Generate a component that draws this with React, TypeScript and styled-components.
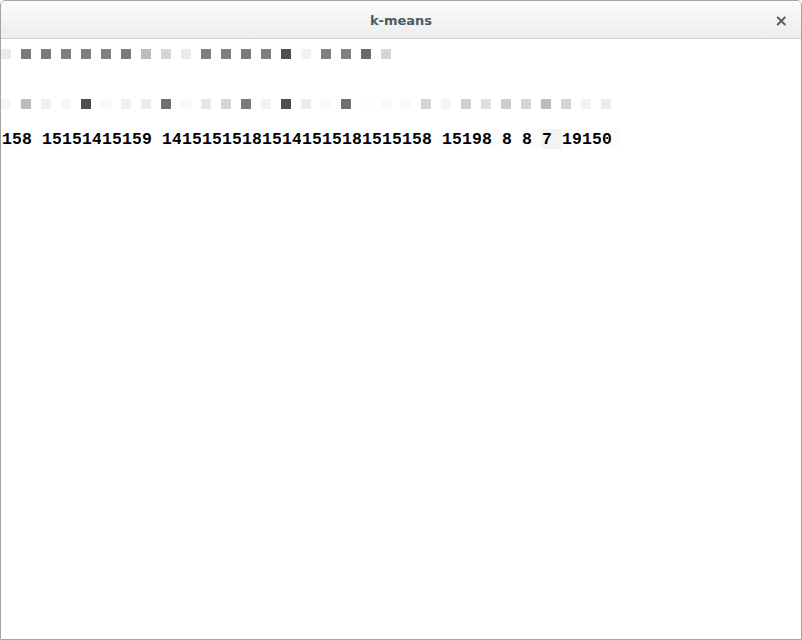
import React from 'react'
import styled, { createGlobalStyle } from 'styled-components'

const GlobalStyle = createGlobalStyle`
  html, body {
    margin: 0;
    padding: 0;
    background: #ffffff;
  }
`;

const Window = styled.div`
  width: 802px;
  height: 640px;
  box-sizing: border-box;
  border: 1px solid #a3a3a3;
  border-radius: 5px 5px 0 0;
  background: #ffffff;
  display: flex;
  flex-direction: column;
  overflow: hidden;
`;

const TitleBar = styled.div`
  height: 38px;
  flex: none;
  box-sizing: border-box;
  border-bottom: 1px solid #cfcfcf;
  background: linear-gradient(#fbfbfb, #ededed);
  display: flex;
  align-items: center;
  justify-content: center;
  position: relative;
`;

const Title = styled.span`
  font: bold 13px "DejaVu Sans", sans-serif;
  color: #4d5b61;
  margin-top: 1px;
`;

const Close = styled.span`
  position: absolute;
  right: 13px;
  top: 10px;
  font: bold 16px "DejaVu Sans", sans-serif;
  color: #4d5b61;
`;

const Content = styled.div`
  padding-top: 10px;
  display: flex;
  flex-direction: column;
`;

const SquareRow = styled.div<{ $gap: number }>`
  display: flex;
  gap: 10px;
  height: 10px;
  margin-bottom: ${(p) => p.$gap}px;
`;

const Square = styled.div<{ $c: string }>`
  width: 10px;
  height: 10px;
  background: ${(p) => p.$c};
`;

const NumberRow = styled.div`
  display: flex;
  height: 20px;
`;

const Cell = styled.span<{ $bg: string }>`
  width: 20px;
  flex: none;
  height: 20px;
  display: flex;
  align-items: center;
  padding-left: 1px;
  box-sizing: border-box;
  background: ${(p) => p.$bg};
  font: bold 16.5px "Liberation Mono", monospace;
  letter-spacing: 0.1px;
  color: #000;
  white-space: pre;
`;

const row1 = [
  '#ebebeb', '#7a7a7a', '#7a7a7a', '#7f7f7f', '#7f7f7f', '#808080', '#7a7a7a', '#bdbdbd',
  '#d6d6d6', '#ebebeb', '#7f7f7f', '#7f7f7f', '#7a7a7a', '#7f7f7f', '#4f4f4f', '#f2f2f2',
  '#808080', '#808080', '#6a6a6a', '#d6d6d6',
];

const row2 = [
  '#f7f7f7', '#bdbdbd', '#f0f0f0', '#f7f7f7', '#4d4d4d', '#f9f9f9', '#f0f0f0', '#ebebeb',
  '#707070', '#f9f9f9', '#e8e8e8', '#d6d6d6', '#7a7a7a', '#f2f2f2', '#4d4d4d', '#ebebeb',
  '#fafafa', '#707070', '#fdfdfd', '#fafafa', '#fafafa', '#d4d4d4', '#f5f5f5', '#d0d0d0',
  '#e0e0e0', '#cccccc', '#d6d6d6', '#bdbdbd', '#d4d4d4', '#f2f2f2', '#ececec',
];

const labels = [
  '15', '8 ', '15', '15', '14', '15', '15', '9 ', '14', '15', '15', '15', '18', '15', '14', '15',
  '15', '18', '15', '15', '15', '8 ', '15', '19', '8 ', '8 ', '8 ', '7 ', '19', '15', '0',
];

// faint tint behind some of the labels
const tint = (i: number) => (i === 27 ? '#f3f3f3' : i % 2 === 0 ? '#fcfcfc' : '#ffffff');

export default function App() {
  return (
    <>
      <GlobalStyle />
      <Window>
        <TitleBar>
          <Title>k-means</Title>
          <Close>×</Close>
        </TitleBar>
        <Content>
          <SquareRow $gap={40}>
            {row1.map((c, i) => (
              <Square key={i} $c={c} />
            ))}
          </SquareRow>
          <SquareRow $gap={20}>
            {row2.map((c, i) => (
              <Square key={i} $c={c} />
            ))}
          </SquareRow>
          <NumberRow>
            {labels.map((t, i) => (
              <Cell key={i} $bg={tint(i)}>
                {t}
              </Cell>
            ))}
          </NumberRow>
        </Content>
      </Window>
    </>
  );
}
